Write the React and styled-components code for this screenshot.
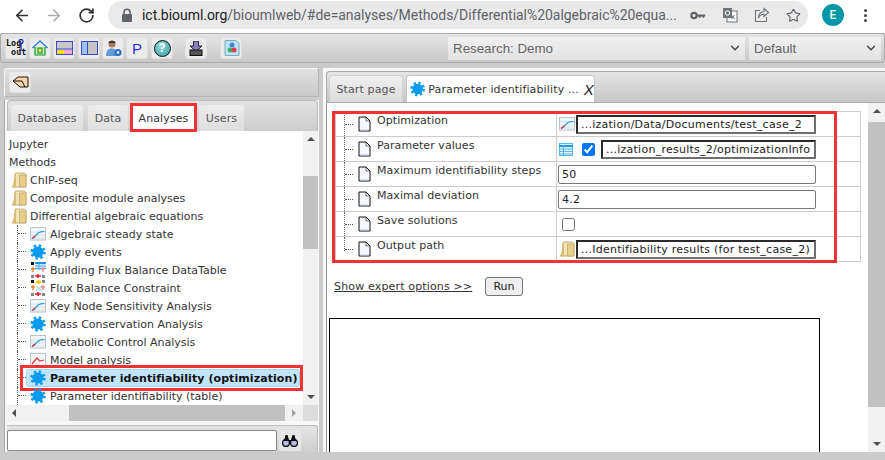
import React from 'react';
import styled, { createGlobalStyle } from 'styled-components';
import { ArrowLeft, ArrowRight, RotateCw, Star, ChevronDown } from 'lucide-react';

const GlobalStyle = createGlobalStyle`
  html, body { margin: 0; padding: 0; background: #fff; }
  body { font-family: "DejaVu Sans", Verdana, sans-serif; font-size: 11px; color: #333; }
  * { box-sizing: border-box; }
`;

const Page = styled.div`
  width: 885px;
  height: 460px;
  overflow: hidden;
  display: flex;
  flex-direction: column;
  background: #cbcbcb;
`;

/* browser bar */
const BrowserBar = styled.div`
  height: 33px;
  flex: none;
  background: #fff;
  display: flex;
  align-items: flex-start;
  padding: 1px 0 0 13px;
`;
const NavBtn = styled.div`
  width: 18px;
  height: 28px;
  margin-right: ${p => p.$gap}px;
  display: flex;
  align-items: center;
  justify-content: center;
  color: ${p => p.$off ? '#a9acb0' : '#303134'};
`;
const UrlPill = styled.div`
  width: 700px;
  height: 28px;
  margin-left: 2px;
  border-radius: 14px;
  background: #e9e9ea;
  display: flex;
  align-items: center;
  padding-left: 13px;
  color: #5f6368;
`;
const UrlText = styled.div`
  font-family: Roboto, "Liberation Sans", sans-serif;
  font-size: 14px;
  letter-spacing: -0.04px;
  margin-left: 9px;
  width: 540px;
  white-space: nowrap;
  overflow: hidden;
  b { font-weight: 400; color: #202124; }
`;
const PillIcon = styled.div`
  width: 16px;
  height: 16px;
  margin-left: ${p => p.$gap}px;
  display: flex;
  align-items: center;
  justify-content: center;
`;
const Avatar = styled.div`
  width: 22px;
  height: 22px;
  margin: 3px 0 0 14px;
  border-radius: 50%;
  background: #0097a7;
  color: #fff;
  font: 500 12px Roboto, sans-serif;
  display: flex;
  align-items: center;
  justify-content: center;
`;
const Kebab = styled.div`
  margin: 8px 0 0 20px;
  display: flex;
  flex-direction: column;
  gap: 2px;
  i { width: 3px; height: 3px; border-radius: 50%; background: #444; display: block; }
`;

/* app toolbar */
const Toolbar = styled.div`
  height: 30px;
  flex: none;
  display: flex;
  align-items: center;
  padding: 0 4px 0 4px;
  background: linear-gradient(#e4e4e4, #c9c9c9);
  border: 1px solid #aaa;
  border-radius: 3px;
`;
const ToolBtn = styled.div`
  width: 22px;
  height: 22px;
  flex: none;
  margin-right: ${p => p.$gap ?? 2}px;
  border-radius: 3px;
  background: #ebebeb;
  border: 1px solid #dedede;
  display: flex;
  align-items: center;
  justify-content: center;
  position: relative;
`;
const LogText = styled.div`
  font: 700 8.5px/9px "DejaVu Sans Mono", monospace;
  color: #111;
  text-align: left;
  width: 20px;
  white-space: pre;
`;
const PLetter = styled.span`
  font: 15px "Liberation Sans", sans-serif;
  color: #2a2ae0;
`;
const HelpDot = styled.div`
  width: 17px;
  height: 17px;
  border-radius: 50%;
  border: 1px solid #111;
  background: radial-gradient(circle at 40% 35%, #9adcdc, #2f9a9f);
  color: #fff;
  font: 700 12px/15px "Liberation Sans", sans-serif;
  text-align: center;
`;
const SelectBox = styled.div`
  width: ${p => p.$w}px;
  height: 23px;
  flex: none;
  margin-left: ${p => p.$gap}px;
  background: linear-gradient(#f0f0f0, #e2e2e2);
  display: flex;
  align-items: center;
  justify-content: space-between;
  padding: 0 3px 0 5px;
  font: 13.33px "Liberation Sans", sans-serif;
  color: #666;
`;

/* main area */
const Main = styled.div`
  flex: 1;
  min-height: 0;
  display: flex;
  background: #cbcbcb;
`;
const LeftPane = styled.div`
  width: 319px;
  flex: none;
  padding: 5px 0 0 4px;
  display: flex;
  flex-direction: column;
`;
const FolderBar = styled.div`
  height: 29px;
  flex: none;
  background: linear-gradient(#e2e2e2, #c8c8c8);
  border: 1px solid #b5b5b5;
  border-top-color: #f4f4f4;
  border-left-color: #f4f4f4;
  border-radius: 3px 3px 0 0;
  padding: 2px 4px;
`;
const LeftBody = styled.div`
  flex: 1;
  min-height: 0;
  margin-top: 3px;
  padding: 0 1px 0 2px;
  border-left: 1px solid #aaa;
  background: #f7f7f7;
  display: flex;
  flex-direction: column;
`;
const TabStrip = styled.div`
  height: 31px;
  flex: none;
  background: linear-gradient(#e2e2e2, #cdcdcd);
  border: 1px solid #bbb;
  border-bottom: 0;
  border-radius: 4px 4px 0 0;
  display: flex;
  align-items: flex-end;
  padding-left: 3px;
`;
const SideTab = styled.div`
  height: 26px;
  width: ${p => p.$w}px;
  flex: none;
  margin-left: ${p => p.$ml ?? 0}px;
  background: ${p => p.$on ? '#fff' : 'linear-gradient(#ececec, #dedede)'};
  border-radius: 3px 3px 0 0;
  color: ${p => p.$on ? '#333' : '#555'};
  display: flex;
  align-items: center;
  justify-content: center;
  position: relative;
  letter-spacing: 0.1px;
`;
const RedMark = styled.div`
  position: absolute;
  border: 3px solid #f03232;
  pointer-events: none;
  top: ${p => p.$t}px;
  left: ${p => p.$l}px;
  right: ${p => p.$r}px;
  bottom: ${p => p.$b}px;
`;
const TreeWrap = styled.div`
  height: 274px;
  flex: none;
  display: flex;
  background: #fff;
`;
const Tree = styled.div`
  flex: 1;
  min-width: 0;
  padding-top: 4px;
  overflow: hidden;
`;
const TreeRow = styled.div`
  height: 18px;
  display: flex;
  align-items: center;
  padding-left: ${p => p.$pad}px;
  white-space: nowrap;
  position: relative;
  color: #333;
`;
const TreeLabel = styled.span`
  margin-left: ${p => p.$gap}px;
`;
const Guide = styled.div`
  align-self: stretch;
  width: 13px;
  flex: none;
  border-left: 1px dotted #555;
`;
const GuideTick = styled.div`
  width: 8px;
  margin-top: ${p => p.$top}px;
  border-top: 1px dotted #555;
`;
const SelectedPill = styled.div`
  display: flex;
  align-items: center;
  width: 274px;
  height: 18px;
  margin-left: -4px;
  padding-left: 3px;
  background: #bfe4fb;
  border: 1px solid #a5d4f2;
  border-radius: 3px;
  font-weight: 700;
  color: #111;
  letter-spacing: 0.08px;
`;
const VScroll = styled.div`
  width: ${p => p.$w}px;
  flex: none;
  background: #f1f1f1;
  display: flex;
  flex-direction: column;
  align-items: center;
`;
const VThumb = styled.div`
  width: 100%;
  height: ${p => p.$h}px;
  flex: none;
  background: #c1c1c1;
`;
const ScrollGap = styled.div`
  flex: ${p => p.$fill ? 1 : 'none'};
  height: ${p => p.$fill ? 'auto' : p.$h + 'px'};
  display: flex;
  align-items: ${p => p.$end ? 'flex-end' : 'flex-start'};
  justify-content: center;
  padding: 6px 0;
`;
const Arrow = styled.div`
  width: 0;
  height: 0;
  border-left: 4px solid transparent;
  border-right: 4px solid transparent;
  ${p => p.$up ? 'border-bottom: 4px solid #505050;' : 'border-top: 4px solid #505050;'}
`;
const HScrollRow = styled.div`
  height: 16px;
  flex: none;
  display: flex;
  background: #fff;
`;
const HScroll = styled.div`
  width: 296px;
  flex: none;
  display: flex;
  align-items: stretch;
  background: #f1f1f1;
`;
const HCorner = styled.div`
  flex: 1;
  background: #dcdcdc;
`;
const HArrow = styled.div`
  width: 0;
  height: 0;
  align-self: center;
  margin-left: ${p => p.$ml}px;
  border-top: 4px solid transparent;
  border-bottom: 4px solid transparent;
  ${p => p.$left ? 'border-right: 4px solid #505050;' : 'border-left: 4px solid #a3a3a3;'}
`;
const HThumb = styled.div`
  width: 216px;
  margin-left: ${p => p.$ml}px;
  background: #c1c1c1;
`;
const SearchRow = styled.div`
  flex: 1;
  margin-top: 4px;
  display: flex;
  padding-top: 4px;
  gap: 2px;
  background: linear-gradient(#e4e4e4, #cfcfcf);
  border-top: 1px solid #bdbdbd;
  border-right: 1px solid #bdbdbd;
  border-radius: 0 3px 0 0;
`;
const SearchInput = styled.div`
  width: 270px;
  height: 21px;
  background: #fff;
  border: 1px solid #888;
  border-radius: 2px;
`;
const SearchBtn = styled.div`
  width: 22px;
  height: 21px;
  background: #e6e6e6;
  border-radius: 3px;
  display: flex;
  align-items: center;
  justify-content: center;
`;

const RightPane = styled.div`
  width: 562px;
  flex: none;
  margin: 5px 0 0 4px;
  padding: 3px 0 0 3px;
  background: #f7f7f7;
  display: flex;
  flex-direction: column;
`;
const RightTabs = styled.div`
  height: 32px;
  flex: none;
  background: linear-gradient(#e4e4e4, #c6c6c6);
  border: 1px solid #aaa;
  border-right: 0;
  border-radius: 4px 0 0 0;
  display: flex;
  align-items: flex-end;
  padding-left: 2px;
  gap: 3px;
`;
const PageTab = styled.div`
  height: 27px;
  flex: none;
  width: ${p => p.$w}px;
  border-radius: 4px 4px 0 0;
  background: ${p => p.$on ? '#fff' : 'linear-gradient(#efefef, #dcdcdc)'};
  border: 1px solid ${p => p.$on ? '#c4c4c4' : '#d0d0d0'};
  border-bottom: 0;
  color: ${p => p.$on ? '#333' : '#555'};
  display: flex;
  align-items: center;
  justify-content: ${p => p.$on ? 'flex-start' : 'center'};
  padding-left: ${p => p.$on ? 3 : 0}px;
  white-space: nowrap;
  letter-spacing: 0.14px;
`;
const TabClose = styled.span`
  font: italic 15px "Liberation Sans", sans-serif;
  color: #222;
  margin-left: 5px;
`;
const RightBody = styled.div`
  height: 349px;
  flex: none;
  display: flex;
  background: #fff;
  border-left: 1px solid #999;
`;
const FormArea = styled.div`
  flex: 1;
  min-width: 0;
  overflow: hidden;
  padding: 8px 0 0 2px;
`;
const TableWrap = styled.div`
  margin-left: 6px;
  width: 526px;
  position: relative;
`;
const ParamTable = styled.table`
  width: 526px;
  border-collapse: collapse;
  table-layout: fixed;
  td {
    height: 25px;
    padding: 0;
    border: 1px solid #ccc;
    vertical-align: top;
  }
  td:first-child { width: 221px; border-left: 1px solid #ccc; }
`;
const LabelCell = styled.div`
  height: 24px;
  display: flex;
  padding-left: 8px;
  letter-spacing: 0.06px;
`;
const RowGuide = styled.div`
  width: 14px;
  flex: none;
  height: ${p => p.$last ? '14px' : '100%'};
  border-left: 1px dotted #666;
`;
const LabelText = styled.span`
  margin: 1px 0 0 6px;
  line-height: 16px;
  color: #333;
`;
const DocIcon = styled.div`
  margin-top: 4px;
  flex: none;
  height: 16px;
`;
const ValueCell = styled.div`
  height: 24px;
  display: flex;
  align-items: center;
  padding-left: ${p => p.$pad ?? 0}px;
`;
const PathBox = styled.div`
  height: 19px;
  width: ${p => p.$w}px;
  margin-left: ${p => p.$gap}px;
  flex: none;
  background: #fff;
  border: 2px solid;
  border-color: #2a2a2a #6e6e6e #6e6e6e #2a2a2a;
  padding-left: 3px;
  line-height: 15px;
  white-space: nowrap;
  overflow: hidden;
  letter-spacing: 0.25px;
  color: #222;
`;
const PlainInput = styled.input`
  width: 258px;
  height: 19px;
  margin: 0 0 0 1px;
  padding: 0 3px;
  border: 1px solid #767676;
  border-radius: 2px;
  font: 11px "DejaVu Sans", sans-serif;
  letter-spacing: 0.2px;
  color: #222;
`;
const Check = styled.input`
  width: 13px;
  height: 13px;
  margin: 0 0 0 ${p => p.$ml}px;
  accent-color: #0075ff;
`;
const ActionRow = styled.div`
  display: flex;
  align-items: center;
  margin-top: 15px;
  padding-left: 5px;
`;
const ExpertLink = styled.a`
  color: #333;
  text-decoration: underline;
  letter-spacing: 0.16px;
  width: 151px;
`;
const RunButton = styled.button`
  width: 38px;
  height: 19px;
  padding: 0;
  background: #efefef;
  border: 1px solid #767676;
  border-radius: 3px;
  font: 11px "DejaVu Sans", sans-serif;
  color: #222;
`;
const OutputBox = styled.div`
  width: 491px;
  height: 200px;
  margin: 22px 0 0 0;
  border: 1px solid #000;
  background: #fff;
`;
const BottomStrip = styled.div`
  height: 8px;
  flex: none;
  background: #cbcbcb;
`;

/* icons */
const FolderIcon = () => (
  <svg width="16" height="16" viewBox="0 0 16 16">
    <path d="M4.500 1h9l1.500 1.500V15H2.500z" fill="#f3e4b4" stroke="#b79c5c" strokeWidth=".8" />
    <path d="M8.500 3h6.500v12H8.500z" fill="#e6cd8a" stroke="#b79c5c" strokeWidth=".6" />
    <path d="M0.500 15.500l3-6V2h1.500v13.500z" fill="#d8bd79" />
  </svg>
);
const ChartIcon = () => (
  <svg width="16" height="14" viewBox="0 0 16 14">
    <rect x=".5" y=".5" width="15" height="12.5" fill="#f2f6f8" stroke="#b6c4cc" />
    <path d="M1 11h14M1 8h14M1 5h14" stroke="#d5e0e6" />
    <path d="M2 11.500C5 11 6 7 9 5.500c2-1 3-1 5.500-1" fill="none" stroke="#1a8fe0" strokeWidth="1.200" />
    <path d="M2 11.500l3-2.500" stroke="#e03030" strokeWidth="1.200" />
  </svg>
);
const ModelChart = () => (
  <svg width="16" height="14" viewBox="0 0 16 14">
    <rect x=".5" y=".5" width="15" height="12.5" fill="#f2f6f8" stroke="#b6c4cc" />
    <path d="M2 11L7 5l3 3 4-1" fill="none" stroke="#e03838" strokeWidth="1.200" />
    <path d="M1 12.500h14" stroke="#1a8fe0" />
  </svg>
);
const GearIcon = () => (
  <svg width="16" height="16" viewBox="0 0 16 16">
    <circle cx="8" cy="8" r="5.600" fill="#0b9bee" />
    <circle cx="8" cy="8" r="6.400" fill="none" stroke="#0b9bee" strokeWidth="2.600" strokeDasharray="2.400 2.620" />
  </svg>
);
const TableIcon = () => (
  <svg width="14" height="13" viewBox="0 0 14 13">
    <rect x=".5" y=".5" width="13" height="12" fill="#dff0f6" stroke="#55b8e8" />
    <path d="M0 3h14" stroke="#1a96e6" strokeWidth="2" />
    <path d="M1 6h13M1 8.500h13M1 11h13M4.500 2v11" stroke="#58b8e8" />
  </svg>
);
const FluxIcon = ({ table }) => (
  <svg width="16" height="16" viewBox="0 0 16 16">
    <rect x="1" y="0" width="3" height="3" fill="#111" />
    {table ? (
      <g>
        <rect x="5" y="0" width="11" height="8" fill="#cfeafc" />
        <path d="M5 1h11" stroke="#1a96e6" strokeWidth="2" />
        <path d="M5 4h11M5 6.500h11M9 2v6" stroke="#45aef0" />
      </g>
    ) : (
      <g>
        <path d="M6 2h5M8.500 0v4" stroke="#f4c20d" strokeWidth="2" />
        <rect x="12" y="0" width="3" height="3" fill="#888" />
        <path d="M6 6l6 5M12 6l-6 5" stroke="#a8d8f0" strokeWidth="1.400" />
      </g>
    )}
    <path d="M1 7h4M3 5v5" stroke="#f08a2c" strokeWidth="1.500" />
    <path d="M11 7h4M13 5v5" stroke="#f59090" strokeWidth="1.500" />
    <rect x="1" y="13" width="3" height="3" fill="#888" />
    <path d="M5 14h6M8 12v4" stroke="#e01c2c" strokeWidth="1.600" />
    <rect x="12" y="13" width="3" height="3" fill="#888" />
  </svg>
);
const PageIcon = () => (
  <svg width="13" height="16" viewBox="0 0 13 16">
    <path d="M1 1h7l4 4v10H1z" fill="#f7f7ff" stroke="#111" />
    <path d="M8 1v4h4" fill="none" stroke="#111" strokeWidth=".6" />
    <path d="M2 14h9" stroke="#c8c8ee" />
  </svg>
);
const KeyIcon = () => (
  <svg width="18" height="9" viewBox="0 0 18 9">
    <circle cx="4.500" cy="4.500" r="3" fill="none" stroke="#5f6368" strokeWidth="2.400" />
    <path d="M7 3.400h10v2.200h-1v1.400h-2V5.600h-2v1.400H10V5.600H7z" fill="#5f6368" />
  </svg>
);
const TranslateIcon = () => (
  <svg width="16" height="16" viewBox="0 0 16 16">
    <rect x="5" y="4" width="10" height="11" fill="#fff" stroke="#70757a" />
    <rect x="1" y="1" width="9" height="10" fill="#70757a" />
    <circle cx="5.500" cy="6" r="2.200" fill="none" stroke="#fff" />
    <path d="M9.500 8l3 4M12.500 8l-3 4" stroke="#70757a" />
  </svg>
);
const ShareIcon = () => (
  <svg width="16" height="16" viewBox="0 0 16 16" fill="none" stroke="#70757a" strokeWidth="1.100">
    <path d="M6 3.500H1.500v11h11V10" />
    <path d="M10 1.500l4.500 4-4.500 4V7.200C7.500 7.200 5.500 8.200 4.500 11c0-4 2-6.300 5.500-6.500z" />
  </svg>
);
const LockIcon = () => (
  <svg width="12" height="15" viewBox="0 0 12 15">
    <path d="M3 6V4.200a3 3 0 016 0V6" fill="none" stroke="#5f6368" strokeWidth="1.600" />
    <rect x="1" y="6" width="10" height="8" rx="1" fill="#5f6368" />
  </svg>
);
const LogKey = styled.svg`
  position: absolute;
  top: 1px;
  right: 2px;
`;
const Binoculars = () => (
  <svg width="16" height="13" viewBox="0 0 16 13">
    <circle cx="4" cy="9" r="3.500" fill="#b9b9e8" stroke="#111" strokeWidth="1.400" />
    <circle cx="12" cy="9" r="3.500" fill="#b9b9e8" stroke="#111" strokeWidth="1.400" />
    <path d="M2 7l1.500-6h2L7 6h2l1.500-5h2L14 7z" fill="#111" />
  </svg>
);

const treeTop = ['ChIP-seq', 'Composite module analyses', 'Differential algebraic equations'];

const treeKids = [
  { label: 'Algebraic steady state', icon: <ChartIcon /> },
  { label: 'Apply events', icon: <GearIcon /> },
  { label: 'Building Flux Balance DataTable', icon: <FluxIcon table /> },
  { label: 'Flux Balance Constraint', icon: <FluxIcon /> },
  { label: 'Key Node Sensitivity Analysis', icon: <ChartIcon /> },
  { label: 'Mass Conservation Analysis', icon: <GearIcon /> },
  { label: 'Metabolic Control Analysis', icon: <ChartIcon /> },
  { label: 'Model analysis', icon: <ModelChart /> },
];

const params = [
  { label: 'Optimization', value: <><ChartIcon /><PathBox $w={240} $gap={1}>...ization/Data/Documents/test_case_2</PathBox></> },
  { label: 'Parameter values', value: <><TableIcon /><Check type="checkbox" defaultChecked $ml={9} /><PathBox $w={215} $gap={6}>...ization_results_2/optimizationInfo</PathBox></> },
  { label: 'Maximum identifiability steps', value: <PlainInput defaultValue="50" /> },
  { label: 'Maximal deviation', value: <PlainInput defaultValue="4.2" /> },
  { label: 'Save solutions', value: <Check type="checkbox" $ml={3} /> },
  { label: 'Output path', value: <><FolderIcon /><PathBox $w={240} $gap={1}>...Identifiability results (for test_case_2)</PathBox></> },
];

export default function App() {
  return (
    <Page>
      <GlobalStyle />
      <BrowserBar>
        <NavBtn $gap={14}><ArrowLeft size={19} strokeWidth={2.2} /></NavBtn>
        <NavBtn $gap={14} $off><ArrowRight size={19} strokeWidth={2.2} /></NavBtn>
        <NavBtn $gap={11}><RotateCw size={17} strokeWidth={2.4} /></NavBtn>
        <UrlPill>
          <LockIcon />
          <UrlText><b>ict.biouml.org</b>/bioumlweb/#de=analyses/Methods/Differential%20algebraic%20equa...</UrlText>
          <PillIcon $gap={8}><KeyIcon /></PillIcon>
          <PillIcon $gap={16}><TranslateIcon /></PillIcon>
          <PillIcon $gap={16}><ShareIcon /></PillIcon>
          <PillIcon $gap={15}><Star size={15} color="#5f6368" strokeWidth={1.8} /></PillIcon>
        </UrlPill>
        <Avatar>E</Avatar>
        <Kebab><i /><i /><i /></Kebab>
      </BrowserBar>

      <Toolbar>
        <ToolBtn>
          <LogText>{'Log\n out'}</LogText>
          <LogKey width="6" height="12" viewBox="0 0 6 12">
            <circle cx="3" cy="2.500" r="2" fill="none" stroke="#1a2aa0" strokeWidth="1.300" />
            <path d="M3 4v7h-2" fill="none" stroke="#1a2aa0" strokeWidth="1.300" />
          </LogKey>
        </ToolBtn>
        <ToolBtn>
          <svg width="16" height="16" viewBox="0 0 16 16">
            <path d="M3 7v8h10V7" fill="#bff0b0" stroke="#0ca02c" strokeWidth="1.200" />
            <path d="M0.500 8L8 1l7.500 7" fill="none" stroke="#3a7ae0" strokeWidth="1.400" />
            <rect x="6" y="8" width="4" height="5" fill="#e8d860" stroke="#0a8a28" />
          </svg>
        </ToolBtn>
        <ToolBtn $gap={3}>
          <svg width="17" height="14" viewBox="0 0 17 14">
            <rect x=".5" y=".5" width="16" height="13" fill="#c8c8c8" stroke="#3a4ad0" />
            <path d="M0 8h17" stroke="#3a4ad0" />
            <rect x="1" y="9" width="7" height="4" fill="#f4e020" />
            <rect x="8" y="9" width="8" height="4" fill="#f4a8d0" />
          </svg>
        </ToolBtn>
        <ToolBtn>
          <svg width="17" height="14" viewBox="0 0 17 14">
            <rect x=".5" y=".5" width="16" height="13" fill="#c4c4c4" stroke="#3a4ad0" />
            <rect x="1" y="1" width="5" height="12" fill="#9cc4e8" />
            <path d="M6.500 0v14" stroke="#3a4ad0" />
          </svg>
        </ToolBtn>
        <ToolBtn>
          <svg width="17" height="18" viewBox="0 0 17 18">
            <circle cx="7" cy="5" r="3.500" fill="#a87a5c" />
            <path d="M3.500 4c0-3 7-3 7 0z" fill="#3a3028" />
            <path d="M1 17c0-6 3-7.500 6-7.500s5 2 5 7.500z" fill="#5c9ad8" />
            <circle cx="13" cy="13.500" r="3.500" fill="#2a6ec8" />
            <circle cx="13" cy="13.500" r="1.400" fill="#d8e8fa" />
          </svg>
        </ToolBtn>
        <ToolBtn $gap={3}><PLetter>P</PLetter></ToolBtn>
        <ToolBtn $gap={12}><HelpDot>?</HelpDot></ToolBtn>
        <ToolBtn $gap={13}>
          <svg width="14" height="15" viewBox="0 0 14 15">
            <path d="M4.500 0h5v5H13L7 10.500 1 5h3.500z" fill="#8a80c8" stroke="#222" />
            <rect x="1" y="9" width="12" height="5.500" fill="#555" stroke="#111" />
          </svg>
        </ToolBtn>
        <ToolBtn>
          <svg width="17" height="16" viewBox="0 0 17 16">
            <path d="M2 .5h11l3 3v12H2z" fill="#bfe2f8" stroke="#7ab" />
            <circle cx="9" cy="5" r="2.500" fill="#3a8ae0" />
            <circle cx="7" cy="10" r="2.500" fill="#40b060" />
            <circle cx="11" cy="10" r="2.500" fill="#e03a4a" />
          </svg>
        </ToolBtn>
        <SelectBox $w={297} $gap={204}>Research: Demo<ChevronDown size={14} color="#444" strokeWidth={2.4} /></SelectBox>
        <SelectBox $w={132} $gap={4}>Default<ChevronDown size={14} color="#444" strokeWidth={2.4} /></SelectBox>
      </Toolbar>

      <Main>
        <LeftPane>
          <FolderBar>
            <ToolBtn>
              <svg width="17" height="12" viewBox="0 0 17 12">
                <path d="M1 5l5-4h10v10H8z" fill="#fbd5a8" stroke="#111" />
                <path d="M1 5h9l3 6" fill="none" stroke="#111" />
              </svg>
            </ToolBtn>
          </FolderBar>
          <LeftBody>
            <TabStrip>
              <SideTab $w={72}>Databases</SideTab>
              <SideTab $w={40} $ml={5}>Data</SideTab>
              <SideTab $w={65} $ml={3} $on>
                Analyses
                <RedMark $t={-2} $l={-1} $r={-1} $b={-1} />
              </SideTab>
              <SideTab $w={45} $ml={3}>Users</SideTab>
            </TabStrip>
            <TreeWrap>
              <Tree>
                <TreeRow $pad={2}>Jupyter</TreeRow>
                <TreeRow $pad={2}>Methods</TreeRow>
                {treeTop.map(label => (
                  <TreeRow $pad={4} key={label}>
                    <FolderIcon />
                    <TreeLabel $gap={3}>{label}</TreeLabel>
                  </TreeRow>
                ))}
                {treeKids.map(item => (
                  <TreeRow $pad={10} key={item.label}>
                    <Guide><GuideTick $top={8} /></Guide>
                    {item.icon}
                    <TreeLabel $gap={4}>{item.label}</TreeLabel>
                  </TreeRow>
                ))}
                <TreeRow $pad={10}>
                  <Guide><GuideTick $top={8} /></Guide>
                  <SelectedPill>
                    <GearIcon />
                    <TreeLabel $gap={4}>Parameter identifiability (optimization)</TreeLabel>
                  </SelectedPill>
                  <RedMark $t={-4} $l={13} $r={0} $b={-4} />
                </TreeRow>
                <TreeRow $pad={10}>
                  <Guide><GuideTick $top={8} /></Guide>
                  <GearIcon />
                  <TreeLabel $gap={4}>Parameter identifiability (table)</TreeLabel>
                </TreeRow>
              </Tree>
              <VScroll $w={15}>
                <ScrollGap $h={45}><Arrow $up /></ScrollGap>
                <VThumb $h={73} />
                <ScrollGap $fill $end><Arrow /></ScrollGap>
              </VScroll>
            </TreeWrap>
            <HScrollRow>
              <HScroll>
                <HArrow $left $ml={5} />
                <HThumb $ml={53} />
                <HArrow $ml={7} />
              </HScroll>
              <HCorner />
            </HScrollRow>
            <SearchRow>
              <SearchInput />
              <SearchBtn><Binoculars /></SearchBtn>
            </SearchRow>
          </LeftBody>
        </LeftPane>

        <RightPane>
          <RightTabs>
            <PageTab $w={74}>Start page</PageTab>
            <PageTab $w={189} $on>
              <GearIcon />
              <TreeLabel $gap={3}>Parameter identifiability ...</TreeLabel>
              <TabClose>X</TabClose>
            </PageTab>
          </RightTabs>
          <RightBody>
            <FormArea>
              <TableWrap>
                <ParamTable>
                  <tbody>
                    {params.map((row, i) => (
                      <tr key={row.label}>
                        <td>
                          <LabelCell>
                            <RowGuide $last={i === params.length - 1}><GuideTick $top={12} /></RowGuide>
                            <DocIcon><PageIcon /></DocIcon>
                            <LabelText>{row.label}</LabelText>
                          </LabelCell>
                        </td>
                        <td>
                          <ValueCell $pad={i === 2 || i === 3 ? 0 : 2}>{row.value}</ValueCell>
                        </td>
                      </tr>
                    ))}
                  </tbody>
                </ParamTable>
                <RedMark $t={0} $l={-3} $r={24} $b={-1} />
              </TableWrap>
              <ActionRow>
                <ExpertLink href="#">Show expert options &gt;&gt;</ExpertLink>
                <RunButton>Run</RunButton>
              </ActionRow>
              <OutputBox />
            </FormArea>
            <VScroll $w={17}>
              <ScrollGap $h={19}><Arrow $up /></ScrollGap>
              <VThumb $h={285} />
              <ScrollGap $fill $end><Arrow /></ScrollGap>
            </VScroll>
          </RightBody>
        </RightPane>
      </Main>
      <BottomStrip />
    </Page>
  );
}
